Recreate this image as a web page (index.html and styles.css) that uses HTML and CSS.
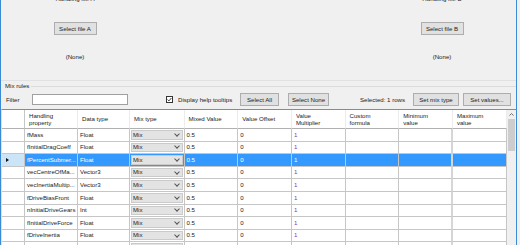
FILE: index.html
```html
<!DOCTYPE html>
<html>
<head>
<meta charset="utf-8">
<link rel="stylesheet" href="styles.css">
</head>
<body>
<div class="app">
  <div class="files">
    <div class="file-col">
      <div class="file-label">Handling file A</div>
      <button class="btn btn-file">Select file A</button>
      <div class="file-none">(None)</div>
    </div>
    <div class="file-col">
      <div class="file-label">Handling file B</div>
      <button class="btn btn-file">Select file B</button>
      <div class="file-none">(None)</div>
    </div>
  </div>
  <div class="group-title"><span>Mix rules</span></div>
  <div class="toolbar">
    <span class="lbl-filter">Filter</span>
    <div class="filter-input"></div>
    <span class="chk"><svg width="7" height="7" viewBox="0 0 7 7"><rect x="0.5" y="0.5" width="6" height="6" fill="#fff" stroke="#333"/><polyline points="1.6,3.6 2.9,4.9 5.4,2" fill="none" stroke="#222" stroke-width="0.9"/></svg></span>
    <span class="chk-label">Display help tooltips</span>
    <button class="btn btn-all">Select All</button>
    <button class="btn btn-none">Select None</button>
    <span class="sel-count">Selected: 1 rows</span>
    <button class="btn btn-mix">Set mix type</button>
    <button class="btn btn-vals">Set values...</button>
  </div>
  <div class="grid-wrap">
    <div class="table">
      <div class="c hd"></div>
      <div class="c hd">Handling<br>property</div>
      <div class="c hd">Data type</div>
      <div class="c hd">Mix type</div>
      <div class="c hd">Mixed Value</div>
      <div class="c hd">Value Offset</div>
      <div class="c hd">Value<br>Multiplier</div>
      <div class="c hd">Custom<br>formula</div>
      <div class="c hd mn">Minimum<br>value</div>
      <div class="c hd">Maximum<br>value</div>

      <div class="c rh"></div><div class="c">fMass</div><div class="c">Float</div><div class="c mt"><div class="combo">Mix</div></div><div class="c">0.5</div><div class="c">0</div><div class="c pu">1</div><div class="c"></div><div class="c mn"></div><div class="c"></div>
      <div class="c rh"></div><div class="c">fInitialDragCoeff</div><div class="c">Float</div><div class="c mt"><div class="combo">Mix</div></div><div class="c">0.5</div><div class="c">0</div><div class="c pu">1</div><div class="c"></div><div class="c mn"></div><div class="c"></div>
      <div class="c rh cur"></div><div class="c sel">fPercentSubmer...</div><div class="c sel">Float</div><div class="c sel mt"><div class="combo">Mix</div></div><div class="c sel">0.5</div><div class="c sel">0</div><div class="c sel">1</div><div class="c sel"></div><div class="c sel mn"></div><div class="c sel"></div>
      <div class="c rh"></div><div class="c">vecCentreOfMa...</div><div class="c">Vector3</div><div class="c mt"><div class="combo">Mix</div></div><div class="c">0.5</div><div class="c">0</div><div class="c pu">1</div><div class="c"></div><div class="c mn"></div><div class="c"></div>
      <div class="c rh"></div><div class="c">vecInertiaMultip...</div><div class="c">Vector3</div><div class="c mt"><div class="combo">Mix</div></div><div class="c">0.5</div><div class="c">0</div><div class="c pu">1</div><div class="c"></div><div class="c mn"></div><div class="c"></div>
      <div class="c rh"></div><div class="c">fDriveBiasFront</div><div class="c">Float</div><div class="c mt"><div class="combo">Mix</div></div><div class="c">0.5</div><div class="c">0</div><div class="c pu">1</div><div class="c"></div><div class="c mn"></div><div class="c"></div>
      <div class="c rh"></div><div class="c">nInitialDriveGears</div><div class="c">Int</div><div class="c mt"><div class="combo">Mix</div></div><div class="c">0.5</div><div class="c">0</div><div class="c pu">1</div><div class="c"></div><div class="c mn"></div><div class="c"></div>
      <div class="c rh"></div><div class="c">fInitialDriveForce</div><div class="c">Float</div><div class="c mt"><div class="combo">Mix</div></div><div class="c">0.5</div><div class="c">0</div><div class="c pu">1</div><div class="c"></div><div class="c mn"></div><div class="c"></div>
      <div class="c rh"></div><div class="c">fDriveInertia</div><div class="c">Float</div><div class="c mt"><div class="combo">Mix</div></div><div class="c">0.5</div><div class="c">0</div><div class="c pu">1</div><div class="c"></div><div class="c mn"></div><div class="c"></div>
      <div class="c rh"></div><div class="c">fClutchChange...</div><div class="c">Float</div><div class="c mt"><div class="combo">Mix</div></div><div class="c">0.5</div><div class="c">0</div><div class="c pu">1</div><div class="c"></div><div class="c mn"></div><div class="c"></div>
    </div>
    <div class="vscroll">
      <div class="vs-up"><svg width="5" height="3" viewBox="0 0 5 3"><polyline points="0.5,2.5 2.5,0.6 4.5,2.5" fill="none" stroke="#606060" stroke-width="0.9"/></svg></div>
      <div class="vs-thumb"></div>
    </div>
  </div>
</div>
</body>
</html>
```
FILE: styles.css
```css
* { box-sizing: border-box; }
body {
  margin: 0;
  width: 520px;
  height: 245px;
  overflow: hidden;
  background: #f0f0f0;
  font-family: "Liberation Sans", Arial, sans-serif;
  font-size: 6.1px;
  color: #222;
}
.app {
  width: 517px;
  height: 245px;
  border-left: 1px solid #3d8ad4;
  border-right: 1px solid #3d8ad4;
  display: flex;
  flex-direction: column;
  overflow: hidden;
}
.files {
  height: 81px;
  flex: none;
  display: flex;
  justify-content: space-between;
  border-bottom: 1px solid #e2e2e2;
}
.file-col {
  width: 148px;
  display: flex;
  flex-direction: column;
  align-items: center;
}
.file-label { margin-top: -5px; height: 8px; line-height: 8px; white-space: nowrap; }
.btn {
  height: 13px;
  border: 1px solid #adadad;
  background: #e1e1e1;
  display: flex;
  align-items: center;
  justify-content: center;
  font: inherit;
  color: inherit;
  padding: 0;
  white-space: nowrap;
  flex: none;
}
.btn-file { width: 43px; margin-top: 19px; }
.file-none { margin-top: 18px; height: 8px; line-height: 8px; }

.group-title {
  display: flex;
  align-items: center;
  height: 8px;
  margin-top: 1px;
  padding-left: 4px;
  line-height: 8px;
  flex: none;
}
.group-title::after {
  content: "";
  flex: 1;
  height: 1px;
  background: #dcdcdc;
  margin-left: 2px;
}
.toolbar {
  display: flex;
  align-items: center;
  height: 13px;
  margin-top: 3px;
  flex: none;
  white-space: nowrap;
}
.lbl-filter { width: 26px; margin-left: 5px; }
.filter-input { width: 96px; height: 11px; background: #fff; border: 1px solid #a0a0a0; }
.chk { margin-left: 38px; width: 7px; height: 7px; display: flex; }
.chk-label { margin-left: 5px; width: 62px; }
.btn-all { width: 39px; }
.btn-none { margin-left: 9px; width: 41px; }
.sel-count { margin-left: 31px; width: 53px; }
.btn-mix { width: 46px; }
.btn-vals { margin-left: 4px; width: 48px; }

.grid-wrap {
  display: flex;
  margin-top: 3px;
  border-top: 1px solid #8a8a8a;
  border-left: 1px solid #e0e0e0;
  background: #fff;
  flex: 1;
  min-height: 0;
}
.table {
  display: grid;
  grid-template-columns: 23px 53px 52px 54.5px repeat(6, 53.7px);
  grid-template-rows: 19.1px;
  grid-auto-rows: 12.6px;
  align-content: start;
  overflow: hidden;
}
.c {
  border-right: 1px solid #c6c6c6;
  border-bottom: 1px solid #c6c6c6;
  padding-left: 2px;
  display: flex;
  align-items: center;
  white-space: nowrap;
  overflow: hidden;
  line-height: 1.1;
}
.hd {
  border-bottom: 1px solid #b0b0b0;
  border-right: 1px solid #ececec;
  padding-left: 4px;
  line-height: 7.5px;
}
.hd:first-child { border-right-color: #c6c6c6; }
.mn { border-right: 2px solid #d6d6d6; }
.hd.mn { border-right: 1px solid #ececec; }
.pu { color: #7b3fb0; }
.sel { background: #3399ff; color: #fff; }
.rh.cur { background: #cce4f7; }
.rh.cur::before {
  content: "";
  width: 0;
  height: 0;
  border-left: 3px solid #111;
  border-top: 2.5px solid transparent;
  border-bottom: 2.5px solid transparent;
  margin-left: 2px;
}
.mt { padding: 1px; }
.combo {
  flex: 1;
  height: 100%;
  background: #e3e3e3;
  border: 1px solid #cacaca;
  display: flex;
  align-items: center;
  justify-content: space-between;
  padding-left: 1px;
  color: #222;
}
.combo::after {
  content: "";
  width: 3px;
  height: 3px;
  border-right: 1px solid #555;
  border-bottom: 1px solid #555;
  transform: rotate(45deg);
  margin: 0 3px 2px 0;
}
.vscroll {
  flex: 1;
  background: #f0f0f0;
  display: flex;
  flex-direction: column;
}
.vs-up { height: 9px; display: flex; align-items: center; justify-content: center; flex: none; }
.vs-thumb { margin: 0 1px; height: 32px; background: #cdcdcd; flex: none; }
```
